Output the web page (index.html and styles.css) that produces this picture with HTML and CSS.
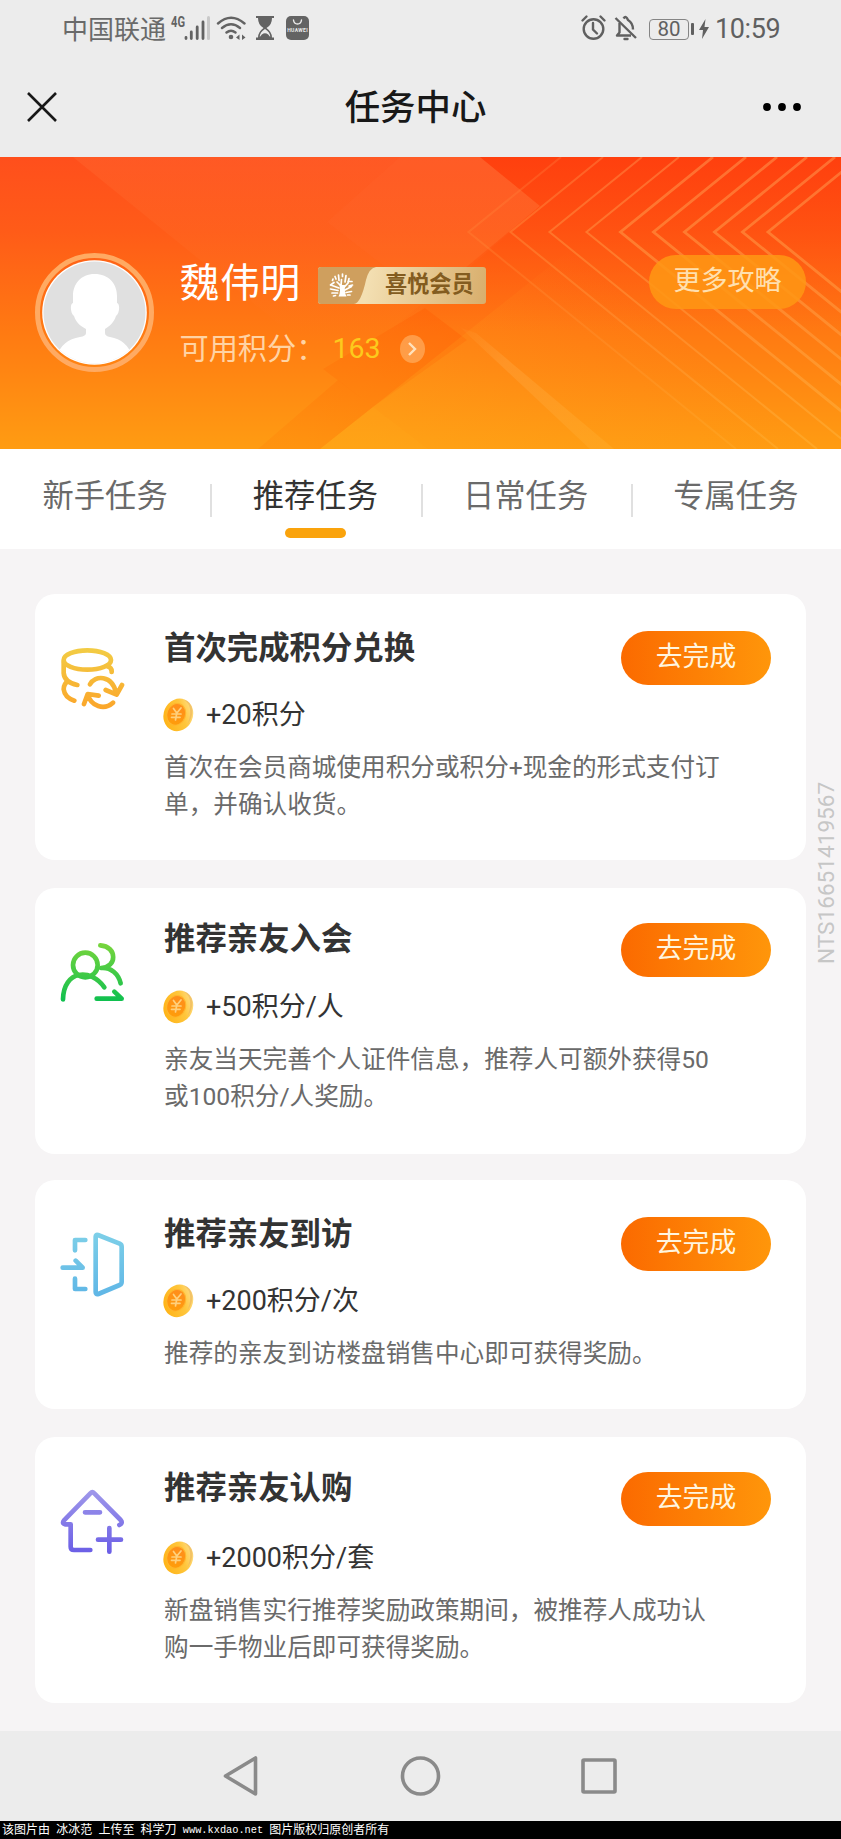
FILE: index.html
```html
<!DOCTYPE html>
<html lang="zh-CN">
<head>
<meta charset="utf-8">
<title>任务中心</title>
<link rel="stylesheet" href="styles.css">
</head>
<body>
<svg class="defs" width="0" height="0" aria-hidden="true">
  <defs>
    <linearGradient id="coinRim" x1="0" y1="1" x2="1" y2="0"><stop offset="0" stop-color="#ffae0c"/><stop offset=".6" stop-color="#ffc63c"/><stop offset="1" stop-color="#ffe9a8"/></linearGradient>
    <linearGradient id="coinFace" x1="0" y1="0" x2="0" y2="1"><stop offset="0" stop-color="#ff8d1d"/><stop offset="1" stop-color="#ff9d0a"/></linearGradient>
    <symbol id="coin" viewBox="0 0 31 34">
      <ellipse cx="15.300" cy="16.800" rx="14.600" ry="16.600" transform="rotate(24 15.300 16.800)" fill="url(#coinRim)"/>
      <path d="M21 1.500Q28 3 29.500 12Q29.500 20 24.500 26Q28 18 27 11Q26 5 21 1.500Z" fill="#e9b45e" opacity=".6"/>
      <ellipse cx="13.200" cy="16.300" rx="9.300" ry="11" transform="rotate(20 13.200 16.300)" fill="url(#coinFace)" stroke="#ffb62e" stroke-width="1"/>
      <path d="M10.500 10.500L13.800 15L18 10M13.800 15L12.500 22M9 16H18M8.500 19.300H17" fill="none" stroke="#ffd07c" stroke-width="1.700" stroke-linecap="round"/>
    </symbol>
  </defs>
</svg>

<header class="status">
  <div class="status-left">
    <span class="carrier">中国联通</span>
    <svg class="status-icons" width="142" height="30" viewBox="170 12 142 30" fill="#636363">
      <text x="171" y="27" class="net" textLength="14" lengthAdjust="spacingAndGlyphs">4G</text>
      <path d="M186 37.500v1M191.300 32v6.500M197.200 27v11.500M203 22v16.500" stroke="#636363" stroke-width="2.800" stroke-linecap="round"/>
      <path d="M208.500 17.500v21" stroke="#c9c9c9" stroke-width="3" stroke-linecap="round"/>
      <g fill="none" stroke="#636363" stroke-width="2.400" stroke-linecap="round"><path d="M218 23.500q13-11.500 26.500 0M222 28q9-7.500 18 0M226.500 32.500q4.500-3.600 9 0"/></g>
      <circle cx="231" cy="37" r="2.300"/><path d="M236 37.500l3.500-3v5.500zM245.500 37.500l-3.500-3v5.500z"/>
      <path d="M256 16h18v2h-2q0 7-5.500 10q5.500 4 5.500 9.500h2v2.500h-18v-2.500h2q0-5.500 5.500-9.500q-5.500-3-5.500-10h-2z"/><path d="M259.800 37q0-5 5.200-8q5.200 3 5.200 8l-2-2.500q-3.200-2.500-6.400 0z" fill="#ececec"/>
      <rect x="286" y="16" width="23" height="24" rx="5"/><path d="M293.500 20q.5 4 4 4t4-4" fill="none" stroke="#ececec" stroke-width="1.400" stroke-linecap="round"/><text x="287.200" y="31.800" textLength="20.500" class="brand">HUAWEI</text>
    </svg>
  </div>
  <div class="status-right">
    <svg width="58" height="30" viewBox="580 12 58 30" fill="none" stroke="#606060" stroke-width="2.400">
      <circle cx="593.500" cy="29" r="9.800"/><path d="M593 23v6.500l4 4M582.500 20.500l4-4M604.500 20.500l-4-4" stroke-linecap="round"/>
      <path d="M619.500 23v9.500l-2.500 3H631" stroke-linejoin="round"/><path d="M623.500 18.500q2.500-3.500 4.500 1.500q5 3 5 9.500M615.500 18l20.500 20"/><path d="M624.500 39h3" stroke-linecap="round"/>
    </svg>
    <span class="battery">80</span><i class="battery-tip"></i>
    <svg class="bolt" width="10" height="20" viewBox="0 0 10 20"><path d="M6.500 0L0 11h4L3 20l7-12H5.500z" fill="#606060"/></svg>
    <time class="clock">10:59</time>
  </div>
</header>

<nav class="navbar">
  <svg width="32" height="32" viewBox="0 0 32 32"><path d="M2 2L30 30M30 2L2 30" stroke="#181818" stroke-width="2.600"/></svg>
  <h1>任务中心</h1>
  <svg width="40" height="10" viewBox="0 0 40 10"><circle cx="5" cy="5" r="3.900"/><circle cx="20" cy="5" r="3.900"/><circle cx="35" cy="5" r="3.900"/></svg>
</nav>

<section class="hero">
  <svg class="hero-art" viewBox="0 157 841 292" preserveAspectRatio="none">
    <defs>
      <linearGradient id="chev" gradientUnits="userSpaceOnUse" x1="0" y1="157" x2="0" y2="449"><stop offset="0" stop-color="#ff7a3a"/><stop offset=".6" stop-color="#ff9434"/><stop offset="1" stop-color="#ffae30"/></linearGradient>
      <linearGradient id="fadeDown" x1="0" y1="0" x2="0" y2="1"><stop offset="0" stop-color="#ff7038" stop-opacity=".3"/><stop offset="1" stop-color="#ff8030" stop-opacity="0"/></linearGradient>
      <linearGradient id="dark" gradientUnits="userSpaceOnUse" x1="600" y1="157" x2="600" y2="330"><stop offset="0" stop-color="#ff3000" stop-opacity=".5"/><stop offset="1" stop-color="#ff4a00" stop-opacity="0"/></linearGradient>
      <linearGradient id="glow" gradientUnits="userSpaceOnUse" x1="390" y1="449" x2="560" y2="240"><stop offset="0" stop-color="#ffb01c" stop-opacity=".32"/><stop offset="1" stop-color="#ffa020" stop-opacity="0"/></linearGradient>
      <linearGradient id="streak" gradientUnits="userSpaceOnUse" x1="461" y1="328" x2="605" y2="449"><stop offset="0" stop-color="#ffa038" stop-opacity=".1"/><stop offset=".3" stop-color="#ffa038" stop-opacity=".5"/><stop offset="1" stop-color="#ffb030" stop-opacity=".35"/></linearGradient>
      <linearGradient id="band" gradientUnits="userSpaceOnUse" x1="440" y1="310" x2="300" y2="449"><stop offset="0" stop-color="#ff5800" stop-opacity=".32"/><stop offset="1" stop-color="#ff6a00" stop-opacity=".16"/></linearGradient>
    </defs>
    <path d="M73 157H480L540 206L380 345H305Z" fill="url(#fadeDown)"/>
    <path d="M400 157H480L540 206L428 300L327 222Z" fill="#ff7a40" opacity=".09"/>
    <path d="M480 157H841V330H390L540 206Z" fill="url(#dark)"/>
    <path d="M425 308L467 340L373 407L323 369Z" fill="url(#band)"/>
    <path d="M338 380L373 407L320 449H258Z" fill="url(#band)"/>
    <path d="M320 449L373 407L570 250H841V449Z" fill="url(#glow)"/>
    <path d="M373 407L428 449H320Z" fill="#ffb01c" opacity=".13"/>
    <path d="M461 328L476 333L614 449H590Z" fill="url(#streak)"/>
    <g fill="none" stroke="url(#chev)">
      <g stroke-width="2"><path opacity=".35" d="M561 157L468.500 232L736 449"/><path opacity=".55" d="M603 157L510.500 232L778 449"/><path opacity=".65" d="M642 157L549.500 232L817 449"/><path opacity=".7" d="M679 157L586.500 232L854 449"/></g>
      <g stroke-width="2.800" opacity=".8"><path d="M713 157L620.500 232L888 449"/><path d="M746 157L653.500 232L921 449"/><path d="M777 157L684.500 232L952 449"/><path d="M807 157L714.500 232L982 449"/><path d="M835 157L742.500 232L1010 449"/><path d="M860 157L768 232L1035 449"/></g>
    </g>
  </svg>
  <div class="avatar">
    <svg width="119" height="119" viewBox="0 0 119 119">
      <defs><clipPath id="av"><circle cx="59.500" cy="59.500" r="51"/></clipPath></defs>
      <circle cx="59.500" cy="59.500" r="57" fill="none" stroke="#ffaa62" stroke-width="5"/>
      <circle cx="59.500" cy="59.500" r="52.300" fill="#fff"/><circle cx="59.500" cy="59.500" r="51" fill="#e0e0e0"/>
      <path clip-path="url(#av)" d="M59.500 21C74 21 82 31 82 43V50C85 50 85 60 81 63C79 69 75 73 70 76V80Q70 83 75 84Q92 87 97 103V119H22V103Q27 87 45 84Q51 83 51 80V76C45 73 41 69 39 63C35 60 35 50 38 50V43C38 31 46 21 59.500 21Z" fill="#fff"/>
    </svg>
  </div>
  <div class="profile">
    <div class="name-row">
      <span class="name">魏伟明</span>
      <span class="badge">
        <svg width="58" height="37" viewBox="0 0 58 37">
          <path d="M0 0H58Q51 1 48 13Q43 36 36 37H0Z" fill="#cf9f5e"/>
          <g fill="none" stroke="#fff" stroke-width="1.700" stroke-linecap="round"><path d="M24 27L23 19L19 15M23 19L23.500 12.500M24.500 22L30 16L31 11.500M26 23.500L33.500 19.500M21 21L14 18.500M20 23.500L12.500 22M19.500 26L14 26M28 25.500L33.500 24.500M16 15.500L12.500 18M18 12L17 9.500M21 13.500L20.500 8M24.500 9.500V7M27 15L28 8.500M30 14.500L34 14.500M14.500 13.500L15 12M31 19L34.500 18M29.500 28L32 28M17.500 28.500L15.500 29"/></g><path d="M21.500 18H27Q26 25 28.500 29.500H20.500Q23 25 21.500 18Z" fill="#fff"/>
        </svg>
        <b>喜悦会员</b>
      </span>
    </div>
    <div class="score-row">
      <span class="score-label">可用积分：</span><span class="score">163</span>
      <span class="go"><svg width="10" height="16" viewBox="0 0 10 16"><path d="M2 2L8 8L2 14" fill="none" stroke="#ffe2bd" stroke-width="2.400"/></svg></span>
    </div>
  </div>
  <a class="more">更多攻略</a>
</section>

<nav class="tabs">
  <a>新手任务</a><a class="active">推荐任务</a><a>日常任务</a><a>专属任务</a>
</nav>

<main class="list">
  <article class="card">
    <svg class="card-icon" viewBox="120 198 195 195">
      <defs><linearGradient id="g1" gradientUnits="userSpaceOnUse" x1="0" y1="200" x2="0" y2="390"><stop offset="0" stop-color="#f2cd45"/><stop offset="1" stop-color="#fba52a"/></linearGradient></defs>
      <g stroke="url(#g1)"><ellipse cx="202" cy="240" rx="71" ry="29"/><path d="M131 245V279Q133 307 172 315M144 303Q131 312 131 328Q134 353 163 362M262 259Q276 263 275 276M210 313C224 284 277 285 288 338M257 330L290 344L306 315M279 368C252 392 213 379 203 343M192 372L203 342L236 347"/></g>
    </svg>
    <div class="card-body">
      <div class="card-head"><h2>首次完成积分兑换</h2><a class="btn">去完成</a></div>
      <p class="points"><svg width="31" height="34"><use href="#coin"/></svg>+20积分</p>
      <p class="desc">首次在会员商城使用积分或积分+现金的形式支付订<br>单，并确认收货。</p>
    </div>
  </article>

  <article class="card raised">
    <svg class="card-icon" viewBox="120 180 195 195">
      <defs><linearGradient id="g2" gradientUnits="userSpaceOnUse" x1="0" y1="190" x2="0" y2="362"><stop offset="0" stop-color="#78d53c"/><stop offset="1" stop-color="#10c04f"/></linearGradient></defs>
      <g stroke="url(#g2)"><circle cx="196" cy="255" r="37"/><path d="M129 358C131 270 212 264 253 322M241 196C292 199 292 263 243 264C273 261 295 282 302 310M230 356H305L283 335"/></g>
    </svg>
    <div class="card-body">
      <div class="card-head"><h2>推荐亲友入会</h2><a class="btn">去完成</a></div>
      <p class="points"><svg width="31" height="34"><use href="#coin"/></svg>+50积分/人</p>
      <p class="desc">亲友当天完善个人证件信息，推荐人可额外获得50<br>或100积分/人奖励。</p>
    </div>
  </article>

  <article class="card short">
    <svg class="card-icon" viewBox="120 186 195 195">
      <defs><linearGradient id="g3" gradientUnits="userSpaceOnUse" x1="0" y1="190" x2="0" y2="380"><stop offset="0" stop-color="#7dcfe8"/><stop offset="1" stop-color="#5fb6e6"/></linearGradient></defs>
      <g stroke="url(#g3)"><path d="M196 210H165V241M165 326V357H196M128 293H188L167 272M227 200Q227 193 234 195L299 221Q305 224 305 230V336Q305 342 299 345L235 372Q227 375 227 366Z"/></g>
    </svg>
    <div class="card-body">
      <div class="card-head"><h2>推荐亲友到访</h2><a class="btn">去完成</a></div>
      <p class="points"><svg width="31" height="34"><use href="#coin"/></svg>+200积分/次</p>
      <p class="desc">推荐的亲友到访楼盘销售中心即可获得奖励。</p>
    </div>
  </article>

  <article class="card last">
    <svg class="card-icon" viewBox="120 176 195 195">
      <defs><linearGradient id="g4" gradientUnits="userSpaceOnUse" x1="0" y1="180" x2="0" y2="368"><stop offset="0" stop-color="#9f98ea"/><stop offset="1" stop-color="#6b5ee6"/></linearGradient></defs>
      <g stroke="url(#g4)"><path d="M152 282H135Q125 279 132 270L211 189Q217 183 223 189L302 269Q310 278 298 284M152 282V349Q152 359 162 359H211M195 246H240M234 328H303M268 293V364"/></g>
    </svg>
    <div class="card-body">
      <div class="card-head"><h2>推荐亲友认购</h2><a class="btn">去完成</a></div>
      <p class="points"><svg width="31" height="34"><use href="#coin"/></svg>+2000积分/套</p>
      <p class="desc">新盘销售实行推荐奖励政策期间，被推荐人成功认<br>购一手物业后即可获得奖励。</p>
    </div>
  </article>
</main>

<div class="watermark">NTS16651419567</div>

<footer class="sysbar">
  <svg viewBox="0 0 841 90" fill="none" stroke="#8a8a8a" stroke-width="3.600" stroke-linejoin="round"><path d="M225.500 45L255.500 27V63Z"/><circle cx="420.500" cy="45" r="18"/><rect x="583" y="29" width="32" height="32" rx="1"/></svg>
</footer>
<div class="credit"><span>该图片由</span><span>冰冰范</span><span>上传至</span><span>科学刀</span><span class="url">www.kxdao.net</span><span>图片版权归原创者所有</span></div>
</body>
</html>
```
FILE: styles.css
```css
* { box-sizing: border-box; }
body {
  margin: 0;
  width: 841px;
  height: 1839px;
  position: relative;
  overflow: hidden;
  display: flex;
  flex-direction: column;
  background: #f6f4f5;
  color: #333;
  font-family: Roboto, "Noto Sans CJK SC", sans-serif;
}
h1, h2, p { margin: 0; }
svg { display: block; flex: none; }
.defs { position: absolute; }

.status {
  height: 58px;
  padding: 0 60px 0 62px;
  display: flex;
  justify-content: space-between;
  align-items: center;
  background: #ececec;
  color: #606060;
}
.status-left, .status-right { display: flex; align-items: center; }
.carrier { padding-top: 1px; font-size: 26px; color: #6a6a6a; line-height: 58px; width: 108px; white-space: nowrap; }
.status-icons { margin-top: -4px; }
.net { font: 700 14.500px Roboto, sans-serif; }
.brand { font: 700 5px Roboto, sans-serif; fill: #ececec; }
.status-right > svg:first-child { margin-top: -4px; }
.battery {
  margin-left: 11px;
  width: 40px;
  height: 21px;
  border: 1.500px solid #858585;
  border-radius: 4px;
  text-align: center;
  font-size: 20.500px;
  line-height: 19px;
}
.battery-tip { width: 3px; height: 12px; margin-left: 2px; border-radius: 1px; background: #606060; }
.bolt { margin: 0 6px 0 5px; }
.clock { font-size: 27px; line-height: 58px; width: 66px; white-space: nowrap; letter-spacing: -0.4px; }

.navbar {
  height: 99px;
  padding: 0 39px 1.500px 26px;
  display: flex;
  align-items: center;
  justify-content: space-between;
  background: #ececec;
}
.navbar h1 { margin: 3px 0 0 11px; font-size: 35.400px; line-height: 50px; font-weight: 500; color: #181818; }

.hero {
  position: relative;
  height: 292px;
  padding: 0 35px;
  display: flex;
  align-items: flex-start;
  background: linear-gradient(180deg, #ff4f1c 0%, #ff5b18 25%, #ff7a12 60%, #ff9c12 100%);
}
.hero-art { position: absolute; inset: 0; width: 100%; height: 100%; }
.avatar, .profile, .more { position: relative; }
.avatar { margin-top: 96px; width: 119px; }
.profile { margin: 96px 0 0 25.500px; }
.name-row { display: flex; height: 60px; align-items: center; }
.name { width: 138.500px; padding-top: 1px; font-size: 40px; line-height: 60px; color: #fff; white-space: nowrap; letter-spacing: .4px; }
.badge {
  margin-top: 5px;
  width: 168px;
  height: 37px;
  display: flex;
  align-items: center;
  border-radius: 3px;
  overflow: hidden;
  background: linear-gradient(100deg, #f3dfb2 30%, #d8ae6c 100%);
}
.badge b { margin: -4px 0 0 9px; font-size: 22.200px; font-weight: 700; line-height: 34px; color: #835c20; white-space: nowrap; }
.score-row { display: flex; height: 44px; margin-top: 14px; align-items: center; line-height: 44px; }
.score-label { width: 153px; font-size: 29.200px; color: #ffd3a4; white-space: nowrap; }
.score { width: 67px; font-size: 28.500px; color: #fcca1d; }
.go {
  margin-top: -1px;
  width: 25px;
  height: 28px;
  border-radius: 50%;
  display: flex;
  align-items: center;
  justify-content: center;
  background: rgba(255, 190, 120, .55);
}
.more {
  margin: 98px 0 0 auto;
  width: 157px;
  height: 54px;
  border-radius: 27px;
  background: rgba(255, 152, 20, .85);
  color: #ffe0b0;
  font-size: 27px;
  line-height: 53px;
  text-align: center;
}

.tabs { height: 100px; display: grid; grid-template-columns: repeat(4, 1fr); background: #fff; }
.tabs a {
  position: relative;
  text-align: center;
  font-size: 31.300px;
  line-height: 96px;
  color: #6a6a6a;
}
.tabs a + a::before {
  content: "";
  position: absolute;
  left: 0;
  top: 35px;
  width: 2px;
  height: 33px;
  background: #e0e0e0;
}
.tabs .active { color: #333; }
.tabs .active::after {
  content: "";
  position: absolute;
  left: calc(50% - 30px);
  top: 79px;
  width: 61px;
  height: 10px;
  border-radius: 5px;
  background: #faa30c;
}

.list {
  flex: 1;
  padding: 45px 35px 0;
  display: flex;
  flex-direction: column;
  gap: 27.600px;
}
.card {
  height: 266px;
  padding: 31px 35px 0 25px;
  display: flex;
  align-items: flex-start;
  border-radius: 20px;
  background: #fff;
}
.card.short { height: 229px; margin-top: -1px; }
.card-icon { width: 65px; height: 65px; margin: 21px 39px 0 0; }
.card-icon g { fill: none; stroke-width: 14; stroke-linecap: round; stroke-linejoin: round; }
.card-body { flex: 1; }
.raised .card-body { margin-top: -1.700px; }
.card-head { display: flex; justify-content: space-between; height: 60px; }
.last .card-head { margin-top: -2px; height: 62px; }
.card h2 { padding-top: 1.500px; font-size: 31.400px; line-height: 44px; font-weight: 700; color: #333; }
.btn {
  margin-top: 6px;
  width: 150px;
  height: 54px;
  border-radius: 27px;
  background: linear-gradient(90deg, #fb6a00, #ff960a);
  color: #fff5df;
  font-size: 26.800px;
  line-height: 53px;
  text-align: center;
}
.points { display: flex; align-items: center; gap: 12px; height: 40px; margin-top: 10px; font-size: 27px; line-height: 40px; }
.points svg { margin-left: -1px; }
.desc { margin-top: 14px; font-size: 24.640px; line-height: 37.200px; color: #6a6a6a; white-space: nowrap; }

.watermark {
  position: absolute;
  right: 1px;
  top: 780px;
  height: 184px;
  width: 27px;
  writing-mode: vertical-rl;
  transform: rotate(180deg);
  font-size: 22.600px;
  line-height: 27px;
  color: #c6c6c6;
  white-space: nowrap;
}

.sysbar { height: 90px; background: #ececec; }
.sysbar svg { width: 841px; height: 90px; }
.credit {
  height: 18px;
  padding-left: 2px;
  display: flex;
  gap: 6.200px;
  background: #000;
  color: #fff;
  font-size: 12px;
  line-height: 18px;
  white-space: nowrap;
}
.url { font-family: "Liberation Mono", monospace; font-size: 10.300px; }
```
